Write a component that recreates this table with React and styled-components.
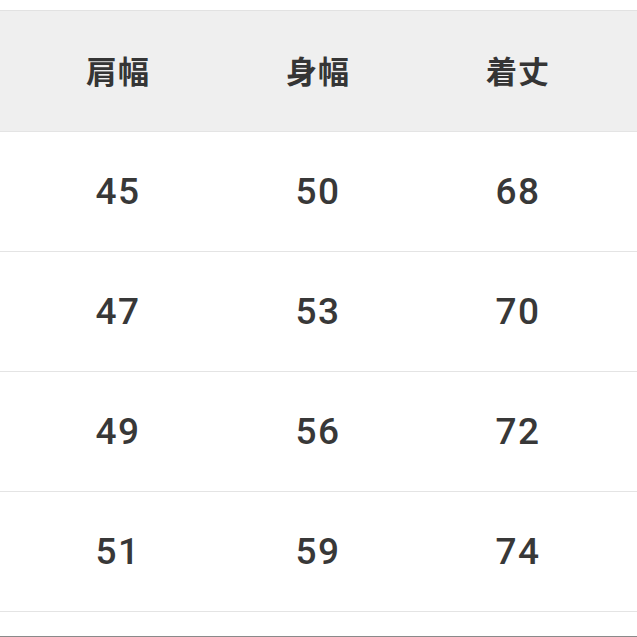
import React from 'react';
import styled, { createGlobalStyle } from 'styled-components';

const GlobalStyle = createGlobalStyle`
  html, body {
    margin: 0;
    padding: 0;
    background: #ffffff;
  }
`;

const Page = styled.div`
  width: 637px;
  height: 637px;
  overflow: hidden;
  display: flex;
  flex-direction: column;
  padding-top: 10px;
  box-sizing: border-box;
  background: #fff;
`;

const Row = styled.div`
  display: grid;
  grid-template-columns: repeat(3, 200px);
  padding-left: 18px;
  height: ${(p) => p.$height}px;
  flex-shrink: 0;
  align-items: center;
  background: ${(p) => (p.$head ? '#efefef' : '#ffffff')};
  border-top: ${(p) => (p.$head ? '1px solid #e2e2e2' : 'none')};
  border-bottom: 1px solid #e4e4e4;
`;

const HeadCell = styled.div`
  text-align: center;
  font-family: "Noto Sans CJK JP", "Noto Sans", sans-serif;
  font-weight: 700;
  font-size: 31px;
  color: #353535;
  letter-spacing: 1px;
  padding-bottom: 3px;
`;

const Cell = styled.div`
  text-align: center;
  font-family: Roboto, "Liberation Sans", sans-serif;
  font-weight: 500;
  font-size: 37px;
  color: #383838;
  letter-spacing: 1.5px;
`;

const Spacer = styled.div`
  flex: 1;
`;

const BottomEdge = styled.div`
  height: 1px;
  flex-shrink: 0;
  background: #8a8a8a;
`;

const headers = ['肩幅', '身幅', '着丈'];
const rows = [
  ['45', '50', '68'],
  ['47', '53', '70'],
  ['49', '56', '72'],
  ['51', '59', '74'],
];

export default function App() {
  return (
    <>
      <GlobalStyle />
      <Page>
        <Row $head $height={120}>
          {headers.map((h) => (
            <HeadCell key={h}>{h}</HeadCell>
          ))}
        </Row>
        {rows.map((r, i) => (
          <Row key={i} $height={119}>
            {r.map((v, j) => (
              <Cell key={j}>{v}</Cell>
            ))}
          </Row>
        ))}
        <Spacer />
        <BottomEdge />
      </Page>
    </>
  );
}
